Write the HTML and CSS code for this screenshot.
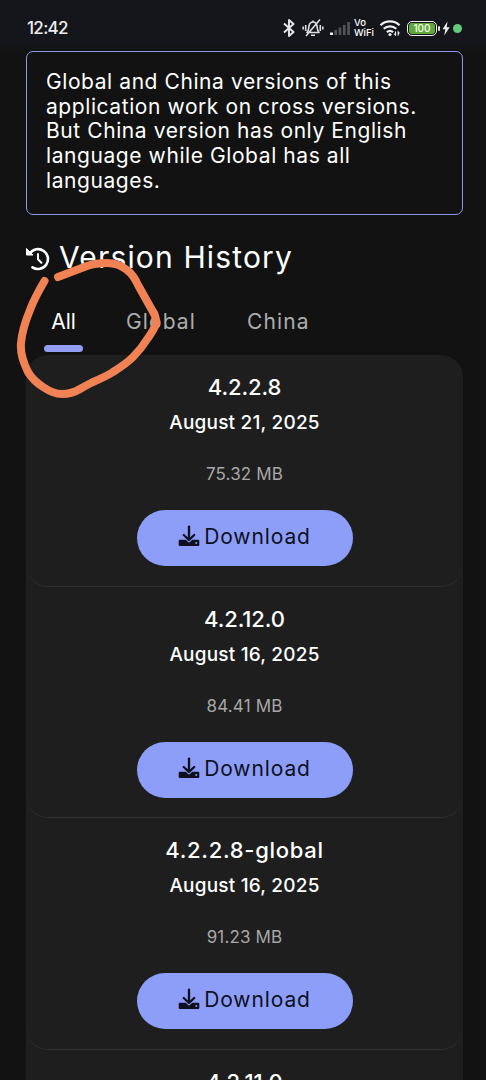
FILE: index.html
```html
<!DOCTYPE html>
<html lang="en">
<head>
<meta charset="utf-8">
<title>Version History</title>
<link rel="stylesheet" href="styles.css">
</head>
<body>
<svg class="symbols" width="0" height="0">
  <symbol id="download" viewBox="0 0 22 22">
    <path d="M11 1.600V14M5.800 10 11 15l5.200-5" fill="none" stroke="currentColor" stroke-width="2.300" stroke-linecap="round" stroke-linejoin="round"/>
    <path d="M1.800 14.700H7.700L11 17.700l3.300-3H20.200a1.100 1.100 0 0 1 1.100 1.100V20a1.100 1.100 0 0 1-1.100 1.100H1.800A1.100 1.100 0 0 1 .7 20v-4.200a1.100 1.100 0 0 1 1.100-1.100ZM18.300 17a1 1 0 1 0 0 2 1 1 0 0 0 0-2Z" fill="currentColor" fill-rule="evenodd"/>
  </symbol>
</svg>
<div class="screen">
  <header class="status">
    <span class="clock">12:42</span>
    <div class="indicators">
      <svg class="bluetooth" width="12" height="20" viewBox="0 0 12 20"><path d="M1 5.500 10.500 14 6 18V2l4.500 4L1 14.500" fill="none" stroke="#e8e8ec" stroke-width="1.900" stroke-linejoin="round"/></svg>
      <svg class="bell" width="22" height="20" viewBox="0 0 22 20"><path d="M5 14.500c2-2 1.500-4 2-6.500C7.500 5.500 9 4 11 4s3.500 1.500 4 4c.5 2.500 0 4.500 2 6.500ZM9 17.300h4M11 2.500V4M18 1.500 4 18M3.700 7v6M1.200 8.500v3M18.300 7v6M20.800 8.500v3" fill="none" stroke="#dedee2" stroke-width="1.600" stroke-linejoin="round"/></svg>
      <svg class="signal" width="22" height="16" viewBox="0 0 22 16"><path d="M1 12.500h3V15H1Z" fill="#eee"/><path d="M5.300 10h2.700v5H5.300ZM9.600 7.500h2.700V15H9.600ZM13.900 5h2.700v10h-2.700ZM18.200 2h2.700v13h-2.700Z" fill="#515257"/></svg>
      <span class="vowifi">Vo<br>WiFi</span>
      <svg class="wifi" width="22" height="18" viewBox="0 0 22 18"><path d="M1.500 6.200c5.300-5 13.700-5 19 0M4.700 9.800c3.600-3.300 9-3.300 12.600 0M7.900 13.200c1.900-1.600 4.300-1.600 6.200 0" fill="none" stroke="#eee" stroke-width="2.200"/><circle cx="11" cy="15.500" r="1.600" fill="#eee"/><path d="M16.500 12.500v3.500l-1.300-1.200M19.200 16.500V13l1.300 1.300" fill="none" stroke="#eee" stroke-width="1.200"/></svg>
      <span class="battery"><span class="charge">100</span></span>
      <svg class="bolt" width="8" height="15" viewBox="0 0 8 15"><path d="M5.500.5.500 8.200H3.400L2.200 14.500 7.700 6.200H4.700Z" fill="#eee"/></svg>
      <span class="dot"></span>
    </div>
  </header>

  <p class="notice">Global and China versions of this<br>application work on cross versions.<br>But China version has only English<br>language while Global has all<br>languages.</p>

  <h1 class="heading">
    <svg class="history" width="26" height="26" viewBox="0 0 26 26"><path d="M5 7.300A9.900 9.900 0 1 1 7.500 21.300" fill="none" stroke="#fff" stroke-width="2.600" stroke-linecap="round"/><path d="M1.500 2.500v6.500h6.500Z" fill="#fff" stroke="#fff" stroke-linejoin="round"/><path d="M13 8v5.300l3.400 3.400" fill="none" stroke="#fff" stroke-width="2" stroke-linecap="round" stroke-linejoin="round"/></svg>
    <span>Version History</span>
  </h1>

  <nav class="tabs">
    <span class="tab active">All</span>
    <span class="tab global">Global</span>
    <span class="tab china">China</span>
  </nav>

  <main class="list">
    <section class="release">
      <h2 class="version">4.2.2.8</h2>
      <p class="date">August 21, 2025</p>
      <p class="size">75.32 MB</p>
      <a class="button"><svg class="icon"><use href="#download"/></svg><span>Download</span></a>
    </section>
    <section class="release">
      <h2 class="version">4.2.12.0</h2>
      <p class="date">August 16, 2025</p>
      <p class="size">84.41 MB</p>
      <a class="button"><svg class="icon"><use href="#download"/></svg><span>Download</span></a>
    </section>
    <section class="release">
      <h2 class="version named">4.2.2.8-global</h2>
      <p class="date">August 16, 2025</p>
      <p class="size">91.23 MB</p>
      <a class="button"><svg class="icon"><use href="#download"/></svg><span>Download</span></a>
    </section>
    <section class="release">
      <h2 class="version">4.2.11.0</h2>
    </section>
  </main>
  <svg class="annotation" width="160" height="160" viewBox="0 0 160 160"><path d="M28.500 27C22 38 17 48 14 56C9 68 6 78 5 89C4 99 8 110 12 118C16 125 21 129 27 133C33 137 39 140 46 140C53 140 59 138 64 135C69 132 73 130 77 128C84 125 91 122 97 118C105 113 111 109 117 103C122 98 127 92 132 84C136 78 140 73 140 68C140 63 139 60 136 56L122 31C118 22 115 19 111 16C105 11 98 9 91 9C84 9 77 10 71 12L42 23" fill="none" stroke="#f08254" stroke-width="8" stroke-linecap="round" stroke-linejoin="round"/></svg>
</div>
</body>
</html>
```
FILE: styles.css
```css
* { box-sizing: border-box; }
body { margin: 0; background: #121212; color: #fff; font-family: Inter, sans-serif; }
.symbols { position: absolute; }
.screen { position: relative; width: 486px; height: 1080px; overflow: hidden; }
.status { display: flex; align-items: center; justify-content: space-between; height: 51px; padding: 5px 24px 0 27px; background: linear-gradient(#14161b 0 43px, #121212 51px); }
.clock { font-size: 17px; font-weight: 500; letter-spacing: -.7px; color: #ececf0; }
.indicators { display: flex; align-items: center; }
.bell { margin-left: 7px; }
.signal { margin-left: 5px; }
.vowifi { margin-left: 3px; width: 21px; font-size: 9.500px; font-weight: 500; line-height: 10px; }
.wifi { margin-left: 4px; }
.battery { position: relative; margin-left: 6px; width: 30px; height: 15px; padding: 1px; border: 1.500px solid #eee; border-radius: 5px; }
.battery::after { content: ""; position: absolute; right: -4px; top: 4px; width: 2px; height: 5px; border-radius: 1px; background: #ddd; }
.charge { display: block; height: 11px; border-radius: 3px; background: #61a83c; color: #f4ffe9; font-size: 10px; font-weight: 500; line-height: 11px; text-align: center; }
.bolt { margin-left: 5px; }
.dot { margin-left: 3px; width: 9px; height: 9px; border-radius: 50%; background: #62ca7a; }
.notice { margin: 0 23px 0 26px; height: 164px; padding: 18px 19px; border: 1.500px solid #8f98e8; border-radius: 7px; font-size: 21px; line-height: 24.700px; letter-spacing: .58px; white-space: nowrap; }
.heading { display: flex; align-items: center; gap: 8px; height: 40px; margin: 22px 0 0 25px; font-size: 30px; font-weight: 400; letter-spacing: 1.150px; white-space: nowrap; }
.history { margin-top: 4px; }
.tabs { display: flex; height: 57px; margin: 21px 0 0 44px; font-size: 21px; line-height: 48px; letter-spacing: 1.100px; color: #adadad; }
.tab { height: 54px; }
.active { position: relative; width: 39px; text-align: center; letter-spacing: 0; color: #fff; }
.active::after { content: ""; position: absolute; left: 0; bottom: 0; width: 39px; height: 7px; border-radius: 3.500px; background: #939ef3; }
.global { margin-left: 43px; width: 70px; }
.china { margin-left: 51px; }
.list { margin: 0 23px 0 26px; border-radius: 22px 22px 0 0; background: #1e1e1e; }
.release { display: flex; flex-direction: column; align-items: center; height: 231.600px; padding-top: 16px; border-bottom: 1px solid #303030; border-radius: 22px; }
.release p, .version { margin: 0; white-space: nowrap; }
.version { height: 32px; font-size: 22px; line-height: 32px; font-weight: 500; letter-spacing: -.1px; }
.named { letter-spacing: .7px; }
.release .date { height: 26px; margin-top: 7px; font-size: 19px; line-height: 26px; font-weight: 500; letter-spacing: .2px; }
.release .size { height: 24px; margin-top: 26px; font-size: 17px; line-height: 24px; letter-spacing: .15px; color: #a7a7a7; }
.button { display: flex; justify-content: center; gap: 4px; width: 216px; height: 56px; margin-top: 24px; padding-top: 14px; border-radius: 28px; background: #8c9ef8; color: #0e1020; font-size: 21px; line-height: 26px; letter-spacing: .9px; }
.icon { width: 22px; height: 22px; margin-top: 1px; }
.annotation { position: absolute; left: 16px; top: 254px; }
```
